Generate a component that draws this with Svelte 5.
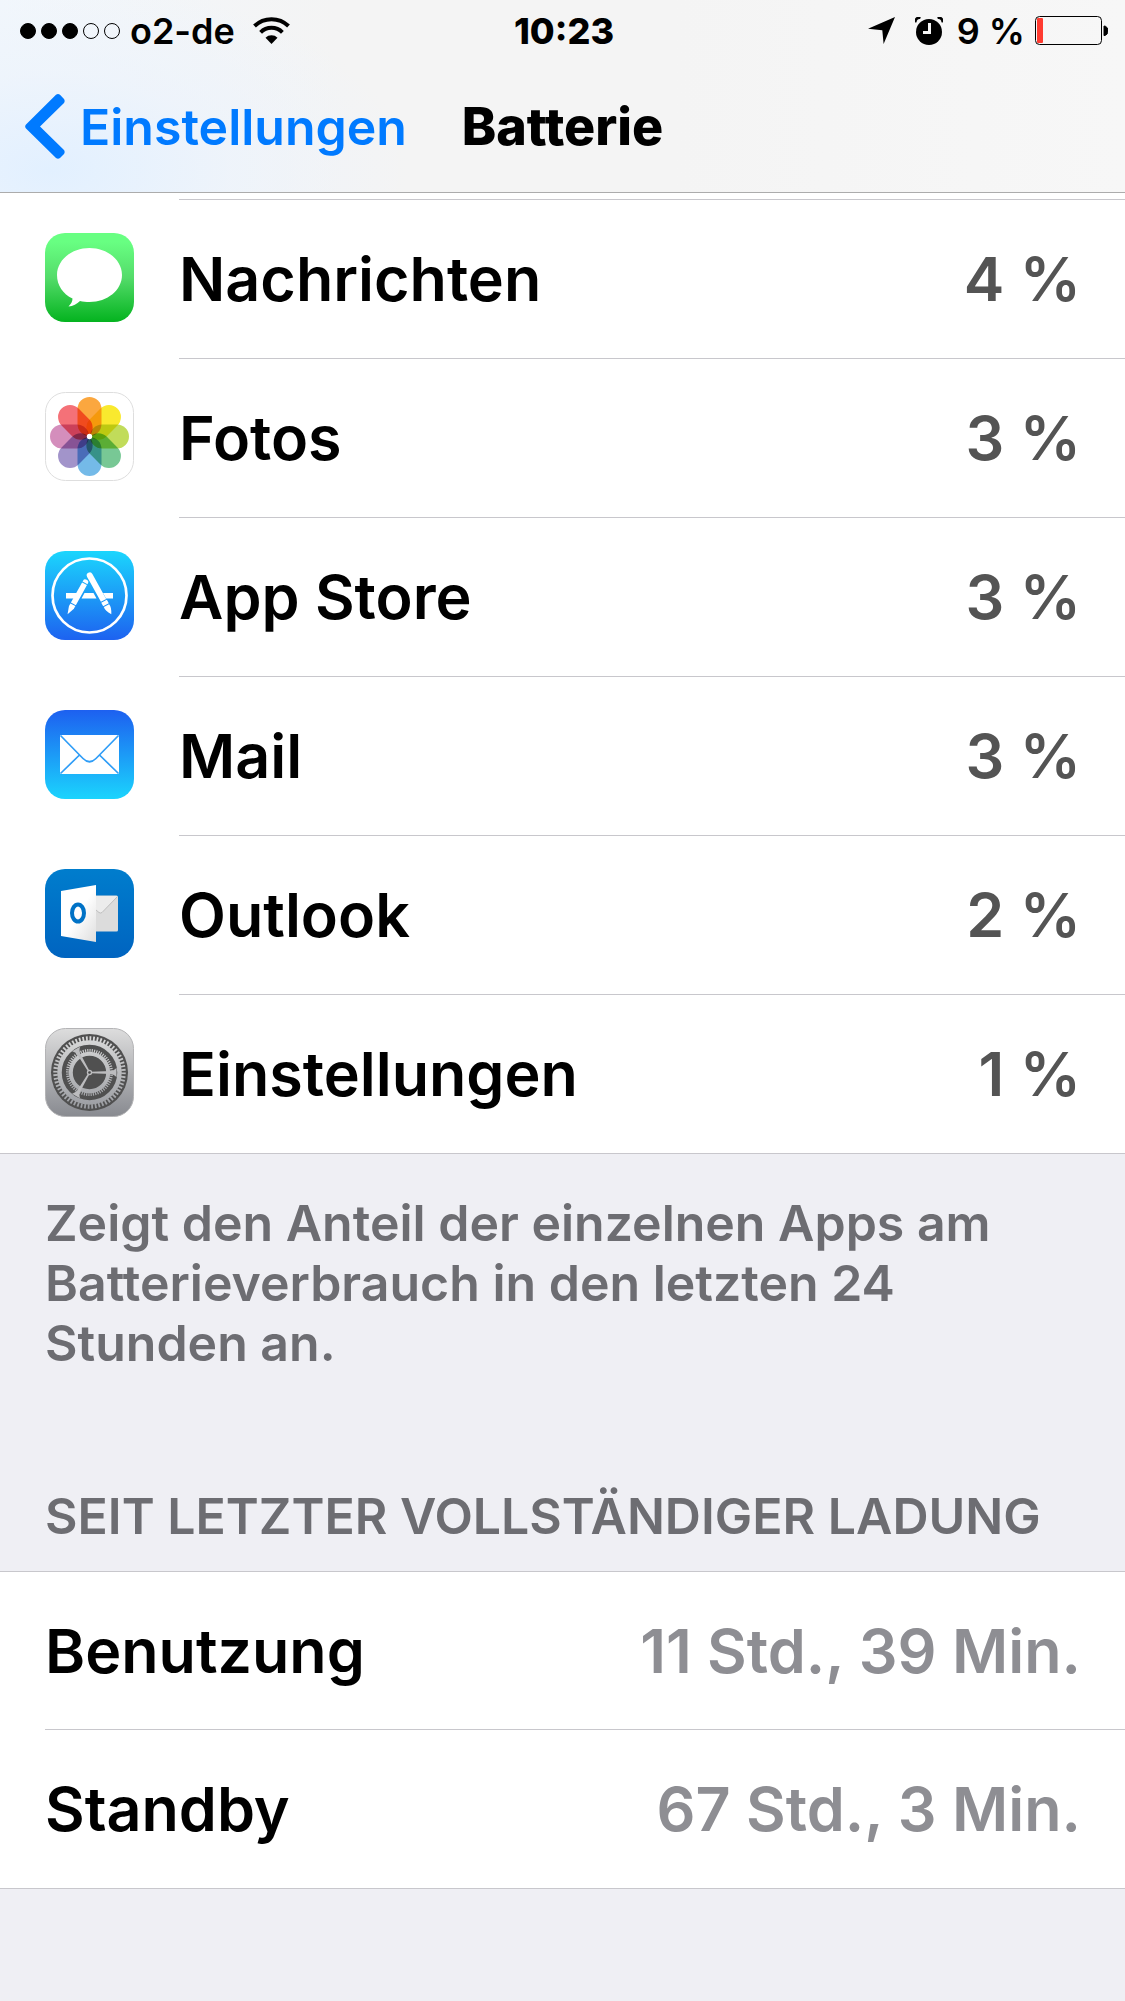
<script lang="ts">
  type AppUsage = { id: string; name: string; share: string };

  const carrier = 'o2-de';
  const time = '10:23';
  const batteryLevel = 9;
  const signalStrength = 3;

  const apps: AppUsage[] = [
    { id: 'messages', name: 'Nachrichten', share: '4 %' },
    { id: 'photos', name: 'Fotos', share: '3 %' },
    { id: 'appstore', name: 'App Store', share: '3 %' },
    { id: 'mail', name: 'Mail', share: '3 %' },
    { id: 'outlook', name: 'Outlook', share: '2 %' },
    { id: 'settings', name: 'Einstellungen', share: '1 %' },
  ];

  const sinceCharge = [
    { label: 'Benutzung', value: '11 Std., 39 Min.' },
    { label: 'Standby', value: '67 Std., 3 Min.' },
  ];

  // clockwise from the top
  const petals = ['#fba02e', '#f9e71c', '#bcd94c', '#6cc48c', '#68b4e6', '#9a8bc6', '#d184b6', '#f4656c'];
  const spokes = [0, 120, 240];
</script>

<header class="top">
  <div class="status-bar">
    <div class="status-left">
      <span class="signal">
        {#each Array(5) as _, i}
          <span class="dot" class:filled={i < signalStrength}></span>
        {/each}
      </span>
      <span>{carrier}</span>
      <svg class="wifi" width="37" height="27" viewBox="0 0 37 27" aria-hidden="true">
        <g fill="none" stroke="#000" stroke-width="4">
          <path d="M1.5 9 A24.5 24.5 0 0 1 35.500 9" />
          <path d="M7.600 15.300 A15.500 15.500 0 0 1 29.400 15.300" />
        </g>
        <path d="M12.500 20.800 A8.500 8.500 0 0 1 24.500 20.800 L18.500 27 Z" />
      </svg>
    </div>
    <span class="time">{time}</span>
    <div class="status-right">
      <svg width="27" height="27" viewBox="0 0 27 27" aria-hidden="true">
        <path d="M27 0 L15.600 27 L14.300 13.300 L0 11.800 Z" />
      </svg>
      <svg class="alarm" width="28" height="28" viewBox="0 0 28 28" aria-hidden="true">
        <circle cx="14" cy="15" r="13" />
        <path d="M0.500 5.500 A4 4 0 0 1 5.500 0.800 M22.500 0.800 A4 4 0 0 1 27.500 5.500" fill="none" stroke="#000" stroke-width="2.500" />
        <path d="M14.500 6 V15.500 H8" fill="none" stroke="#f6f6f6" stroke-width="3" />
      </svg>
      <span>{batteryLevel} %</span>
      <svg class="battery" width="73" height="29" viewBox="0 0 73 29" aria-hidden="true">
        <rect x="0.500" y="0.500" width="66" height="28" rx="4" fill="none" stroke="#000" />
        <rect x="2" y="2" width={Math.round(batteryLevel * 0.63)} height="25" rx="1" fill="#ff3b30" />
        <path d="M69 10 A4 4.800 0 0 1 69 19.600 Z" stroke="#000" />
      </svg>
    </div>
  </div>

  <nav class="nav-bar">
    <a class="back" href="#einstellungen">
      <svg width="40" height="65" viewBox="0 0 40 65" aria-hidden="true">
        <path d="M31 0.800 Q33 -0.800 35 0.800 L39 5 Q40.300 7 39 9 L15 32.500 L39 56 Q40.300 58 39 60 L35 64 Q33 65.500 31 64 L1 34.500 Q-0.700 32.500 1 30.500 Z" fill="#007aff" />
      </svg>
      Einstellungen
    </a>
    <h1>Batterie</h1>
  </nav>
</header>

{#snippet appIcon(id: string)}
  <svg class="app-icon" width="89" height="89" viewBox="0 0 89 89" aria-hidden="true">
    {#if id === 'messages'}
      <defs>
        <linearGradient id="g-messages" x2="0" y2="1">
          <stop offset="0.100" stop-color="#68ff82" />
          <stop offset="0.500" stop-color="#54dc6a" />
          <stop offset="1" stop-color="#04b31f" />
        </linearGradient>
      </defs>
      <rect width="89" height="89" rx="20" fill="url(#g-messages)" />
      <path d="M44.500 15 C62.500 15 77 27 77 42 C77 57 62.500 69 44.500 69 C41 69 38 68.700 35 68 C32 71 28 73.300 23.500 73.500 C26 71 27.500 68.500 27.500 65.500 C18 61 12 52.500 12 42 C12 27 26.500 15 44.500 15 Z" fill="#fff" />
    {:else if id === 'photos'}
      <rect x="0.500" y="0.500" width="88" height="88" rx="20" fill="#fff" stroke="#dedede" />
      <g class="petals">
        {#each petals as color, i}
          <rect x="32.500" y="5" width="24" height="39" rx="12" fill={color} transform="rotate({i * 45} 44.500 44.500)" />
        {/each}
      </g>
      <circle cx="44.500" cy="44.500" r="2.700" fill="#fff" />
    {:else if id === 'appstore'}
      <defs>
        <linearGradient id="g-appstore" x2="0" y2="1">
          <stop offset="0" stop-color="#1bd6fd" />
          <stop offset="1" stop-color="#1d62f0" />
        </linearGradient>
      </defs>
      <rect width="89" height="89" rx="20" fill="url(#g-appstore)" />
      <circle cx="44.500" cy="44.500" r="37" fill="none" stroke="#fff" stroke-width="2.700" />
      <path d="M21 42 H33 L30 47.500 H21 Z M39.500 42 H48.500 L51.500 47.500 H36.500 Z M58 42 H68 V47.500 H61 Z" fill="#fff" />
      <g fill="#fff" transform="rotate(-29 44.500 24)">
        <path d="M41.500 29 V24.500 Q41.500 21.500 44.500 21.500 Q47.500 21.500 47.500 24.500 V53 H41.500 Z" />
        <path d="M41.300 54 H47.700 V58 H41.300 Z M41.500 59 H47.500 Q48.300 63 44.500 69 Q40.700 63 41.500 59 Z" />
      </g>
      <g fill="#fff" transform="rotate(29 40.500 31)">
        <path d="M37.700 32 V31 Q37.700 28.500 40.500 28.500 Q43.300 28.500 43.300 31 V32 Z M37.700 33 H43.300 V56 H37.700 Z" />
        <path d="M37.700 57 H43.300 V60 L40.500 68 L37.700 60 Z" />
      </g>
    {:else if id === 'mail'}
      <defs>
        <linearGradient id="g-mail" x2="0" y2="1">
          <stop offset="0" stop-color="#1d60f0" />
          <stop offset="1" stop-color="#1bd4fd" />
        </linearGradient>
      </defs>
      <rect width="89" height="89" rx="20" fill="url(#g-mail)" />
      <rect x="15" y="25" width="59" height="39" rx="1" fill="#fff" />
      <path d="M15.500 25.500 L38 48.500 Q44.500 55 51 48.500 L73.500 25.500 M15.500 63.500 L34.500 45 M73.500 63.500 L54.500 45" fill="none" stroke="#2f9df7" stroke-width="1.700" />
    {:else if id === 'outlook'}
      <defs>
        <linearGradient id="g-outlook" x2="0" y2="1">
          <stop offset="0" stop-color="#007dcd" />
          <stop offset="1" stop-color="#0064c0" />
        </linearGradient>
        <linearGradient id="g-door" x2="1" y2="1">
          <stop offset="0.500" stop-color="#fff" />
          <stop offset="1" stop-color="#dedede" />
        </linearGradient>
      </defs>
      <rect width="89" height="89" rx="20" fill="url(#g-outlook)" />
      <rect x="40" y="26.500" width="33" height="36" rx="1.500" fill="#dcdcdc" />
      <path d="M51 27 H72.500 L57 43.500 Q55.500 44.500 54 43.500 L51 41 Z" fill="#ececec" />
      <path d="M51 41 L54 43.500 Q55.500 44.500 57 43.500 L72.500 27.500" fill="none" stroke="#bfbfbf" />
      <path d="M16 22 L51 16 V73 L16 67 Z" fill="url(#g-door)" />
      <ellipse cx="33" cy="44" rx="6" ry="8.500" fill="none" stroke="#0072c6" stroke-width="4" />
    {:else}
      <defs>
        <linearGradient id="g-settings" x2="0" y2="1">
          <stop offset="0" stop-color="#dddddd" />
          <stop offset="1" stop-color="#888a90" />
        </linearGradient>
        <linearGradient id="g-gear" x1="0" y1="8" x2="0" y2="81" gradientUnits="userSpaceOnUse">
          <stop offset="0" stop-color="#dadada" />
          <stop offset="1" stop-color="#9a9ca1" />
        </linearGradient>
      </defs>
      <rect x="0.500" y="0.500" width="88" height="88" rx="20" fill="url(#g-settings)" stroke="#b4b4b6" />
      <circle cx="44.500" cy="44.500" r="38.500" fill="#505050" />
      <g fill="none" stroke="url(#g-gear)">
        <circle cx="44.500" cy="44.500" r="34" stroke-width="4.500" pathLength="120" stroke-dasharray="1 1" />
        <circle cx="44.500" cy="44.500" r="30" stroke-width="4.500" />
        <circle cx="44.500" cy="44.500" r="22" stroke-width="3" pathLength="120" stroke-dasharray="1 1" />
        <circle cx="44.500" cy="44.500" r="18.700" stroke-width="4" />
      </g>
      {#each spokes as angle}
        <g transform="rotate({angle} 44.500 44.500)">
          <path d="M46 43.700 L66 43 Q69 42.500 71.500 40 V49 Q69 46.500 66 46 L46 45.300 Z" fill="#bcbcbe" />
        </g>
      {/each}
      <circle cx="44.500" cy="44.500" r="2.700" fill="#bcbcbe" />
      <circle cx="44.500" cy="44.500" r="1.300" fill="#444" />
    {/if}
  </svg>
{/snippet}

<main>
  <section>
    <ul class="group apps">
      {#each apps as app}
        <li>
          {@render appIcon(app.id)}
          <div class="row-body">
            <span class="label">{app.name}</span>
            <span class="share">{app.share}</span>
          </div>
        </li>
      {/each}
    </ul>
    <p class="footnote">Zeigt den Anteil der einzelnen Apps am Batterieverbrauch in den letzten 24 Stunden an.</p>
  </section>

  <section>
    <h2>Seit letzter vollständiger Ladung</h2>
    <ul class="group times">
      {#each sinceCharge as row}
        <li>
          <div class="row-body">
            <span class="label">{row.label}</span>
            <span class="value">{row.value}</span>
          </div>
        </li>
      {/each}
    </ul>
  </section>
</main>

<style>
  :global(body) {
    margin: 0;
    background: #efeff4;
    color: #000;
    font-family: Inter, "Liberation Sans", sans-serif;
    font-weight: 600;
  }

  .top {
    position: sticky;
    top: 0;
    z-index: 1;
    border-bottom: 1px solid #acacac;
    background:
      radial-gradient(ellipse 360px 190px at 50px 170px, #e2f0ff, rgba(236, 243, 252, 0.7) 50%, rgba(245, 245, 245, 0)),
      linear-gradient(90deg, #f2f7fc, #f4f4f4 30%, #f4f4f4 60%, #f7f7f7);
  }

  .status-bar {
    display: grid;
    grid-template-columns: 1fr auto 1fr;
    align-items: center;
    height: 61px;
    padding: 0 17px 0 20px;
    font-size: 36px;
    line-height: 60px;
  }

  .status-left,
  .status-right {
    display: flex;
    align-items: center;
  }

  .status-left {
    gap: 10px;
  }

  .status-right {
    justify-content: flex-end;
    gap: 10px;
  }

  .signal {
    display: flex;
    gap: 5px;
  }

  .dot {
    box-sizing: border-box;
    width: 16px;
    height: 16px;
    border: 1px solid #000;
    border-radius: 50%;
  }

  .dot.filled {
    background: #000;
  }

  .wifi {
    margin-left: 8px;
  }

  .alarm {
    margin: 0 4px 0 10px;
  }

  .time {
    font-weight: 800;
  }

  .nav-bar {
    display: grid;
    grid-template-columns: 1fr auto 1fr;
    align-items: center;
    height: 131px;
    padding: 0 25px;
    font-size: 50px;
    line-height: 60px;
  }

  .back {
    display: flex;
    align-items: center;
    gap: 15px;
    color: #007aff;
    text-decoration: none;
  }

  h1 {
    margin: 0;
    font-size: 52px;
    font-weight: 800;
  }

  .group {
    margin: 0;
    padding: 0;
    list-style: none;
    background: #fff;
    border-bottom: 1px solid #c8c7cc;
  }

  .group li {
    display: flex;
  }

  .row-body {
    flex: 1;
    display: flex;
    align-items: center;
    justify-content: space-between;
    padding-right: 44px;
    font-size: 61px;
    line-height: 76px;
  }

  .apps {
    padding-top: 6px;
  }

  .app-icon {
    flex-shrink: 0;
    margin: 34px 45px 36px;
  }

  .apps .row-body {
    border-top: 1px solid #c8c7cc;
  }

  .petals {
    isolation: isolate;
  }

  .petals rect {
    mix-blend-mode: multiply;
    opacity: 0.92;
  }

  .share {
    color: #545454;
  }

  .times {
    border-top: 1px solid #c8c7cc;
  }

  .times li {
    padding-left: 45px;
  }

  .times .row-body {
    padding-top: 41px;
    padding-bottom: 40px;
    border-bottom: 1px solid #c8c7cc;
  }

  .times li:last-child .row-body {
    border-bottom-color: transparent;
  }

  .value {
    color: #8e8e93;
  }

  .footnote,
  h2 {
    margin: 0;
    color: #6d6d72;
    font-size: 50px;
    font-weight: 600;
    line-height: 60px;
  }

  .footnote {
    padding: 39px 45px 0;
  }

  h2 {
    padding: 113px 45px 25px;
    text-transform: uppercase;
  }
</style>
